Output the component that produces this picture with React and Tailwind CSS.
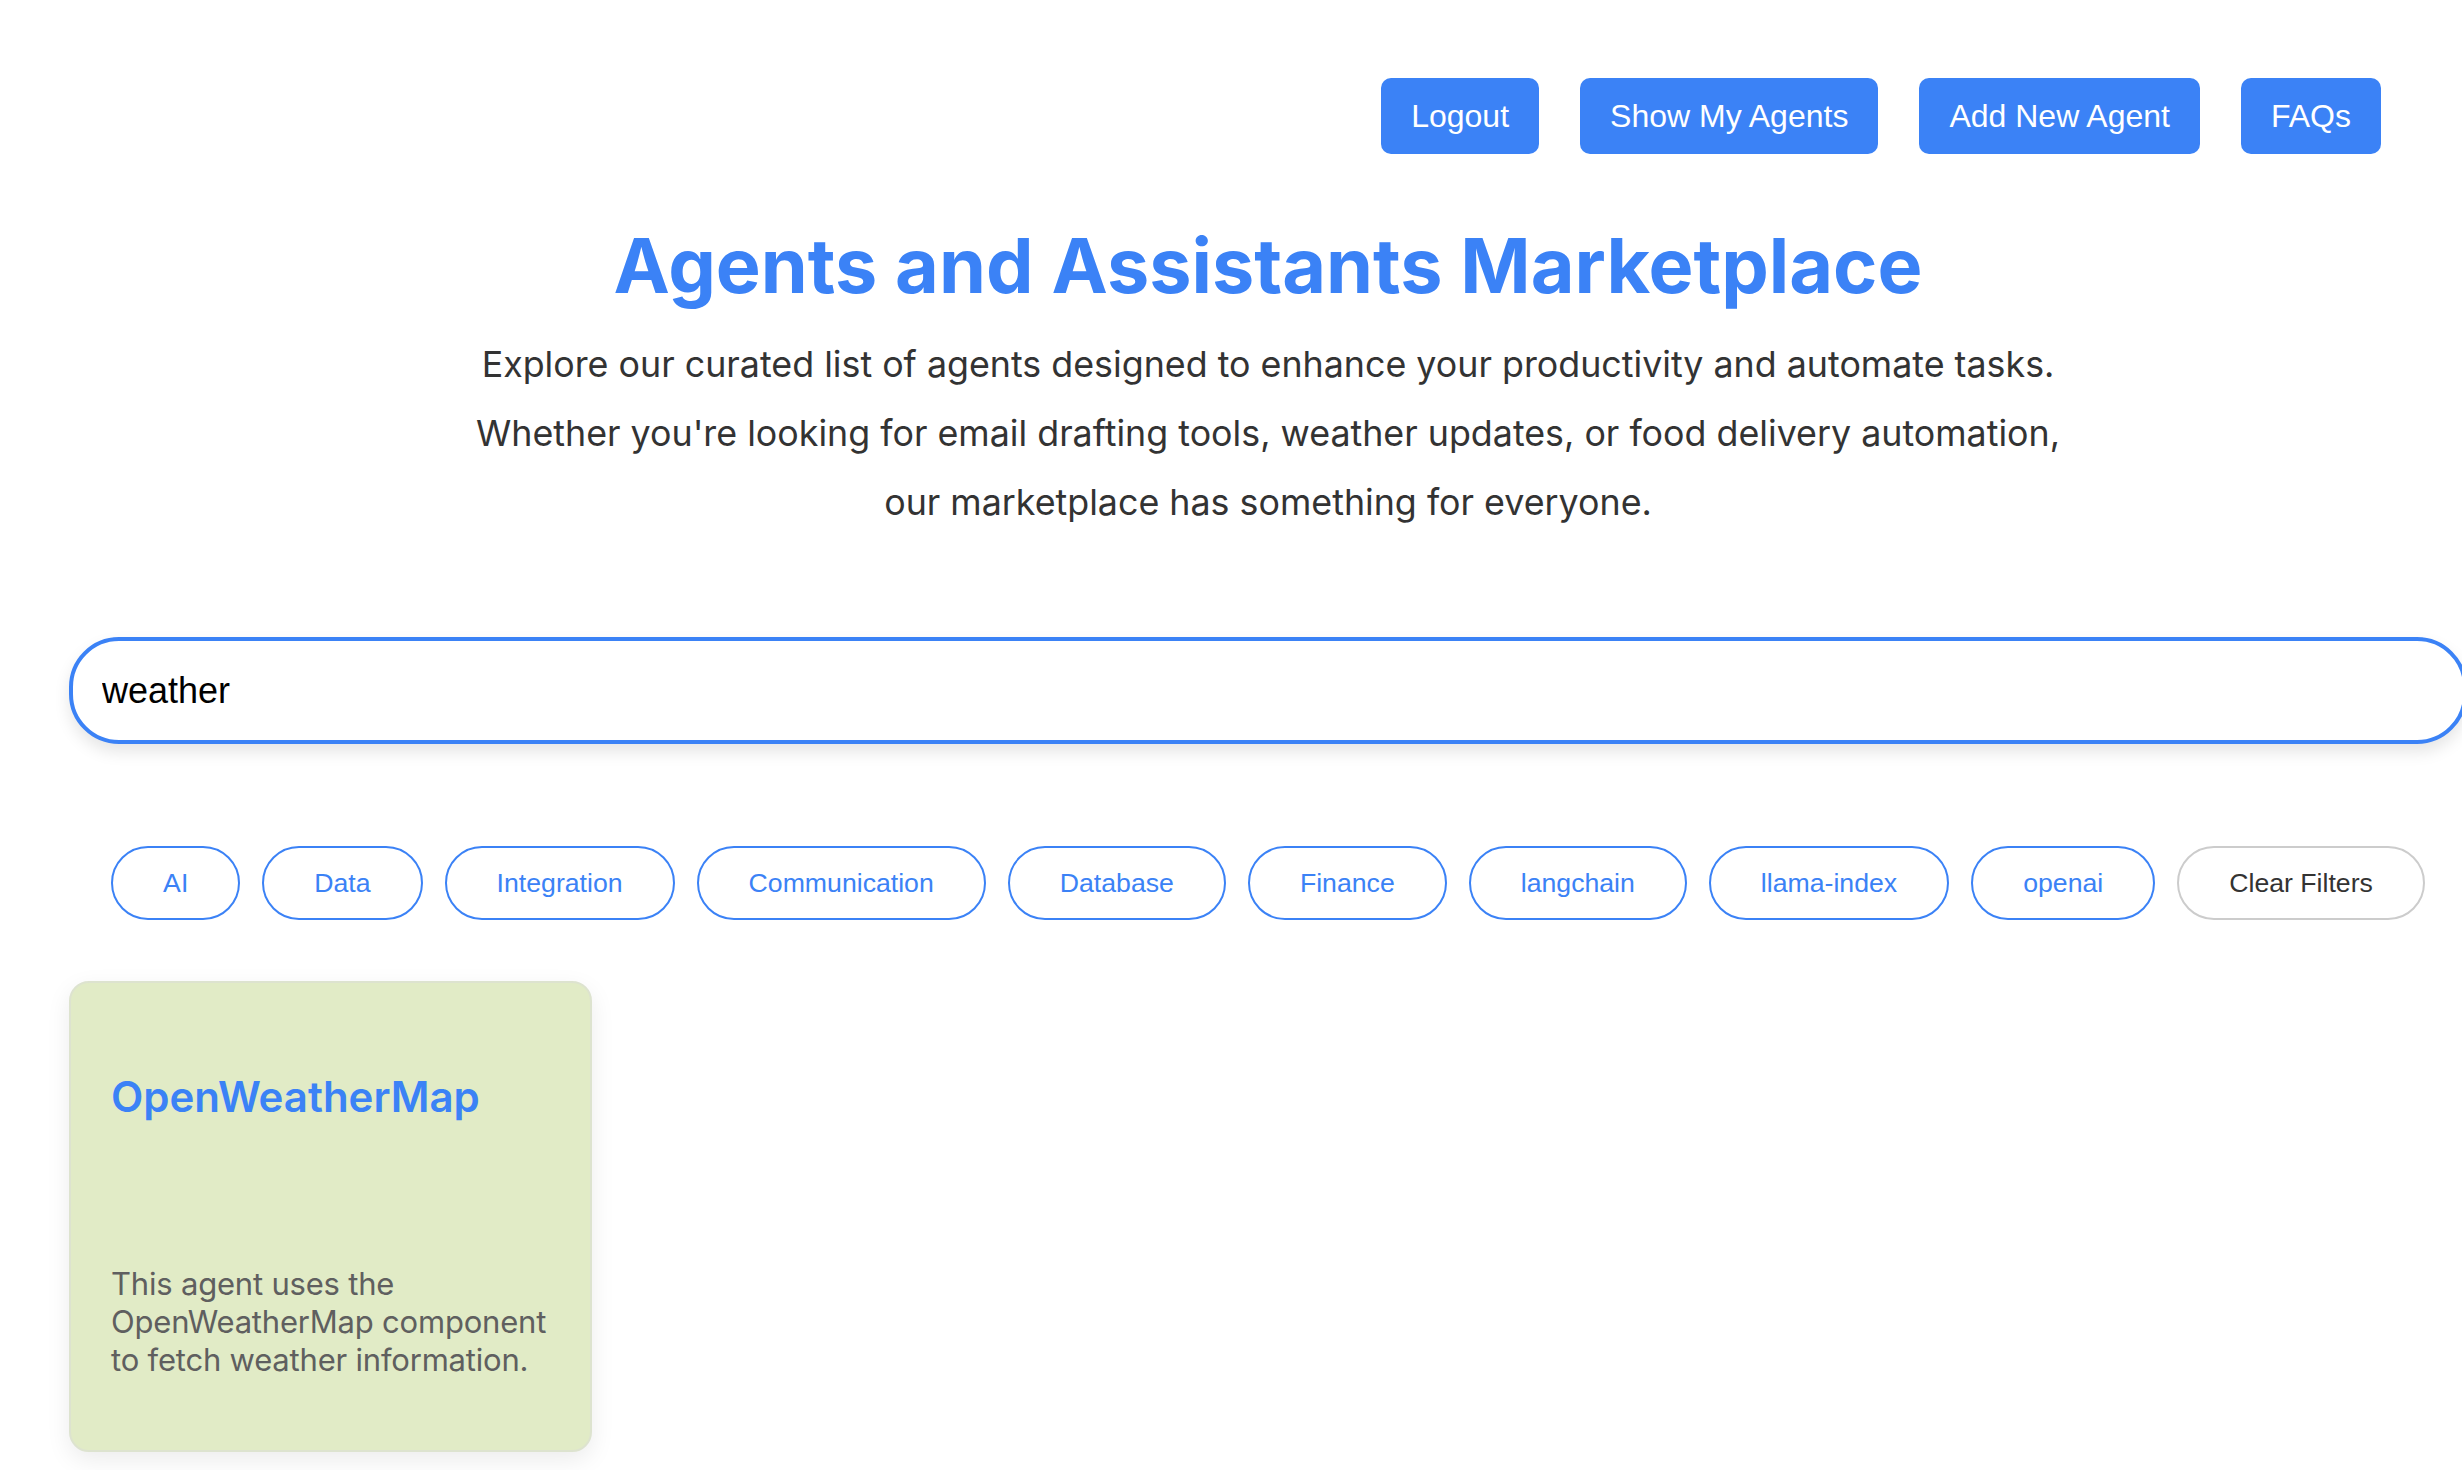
const tags = [
  "AI",
  "Data",
  "Integration",
  "Communication",
  "Database",
  "Finance",
  "langchain",
  "llama-index",
  "openai",
];

function NavButton({ children }) {
  return (
    <button
      type="button"
      className="h-[76px] rounded-[10px] bg-[#3b82f6] px-[30px] font-['Liberation_Sans',Arial,sans-serif] text-[32px] text-white"
    >
      {children}
    </button>
  );
}

function AgentCard({ name, lines }) {
  return (
    <div className="flex h-[471px] w-[523px] flex-col rounded-[20px] border-2 border-[#dde3cf] bg-[#e1ebc6] px-[40px] pt-[40px] pb-[40px] shadow-[0_8px_24px_rgba(0,0,0,0.08)]">
      <h3 className="mt-[48px] text-[42px] leading-[51px] font-semibold text-[#3b82f6]">
        {name}
      </h3>
      <p className="mt-auto mb-[31px] whitespace-nowrap text-[31px] leading-[38px] tracking-[-0.2px] text-[#5f5f5f]">
        {lines.map((l, i) => (
          <span key={i} className="block">
            {l}
          </span>
        ))}
      </p>
    </div>
  );
}

export default function App() {
  return (
    <div className="w-full overflow-hidden bg-white">
      <div className="w-[2536px] px-[69px] pb-[40px] font-['Inter',sans-serif]">
        <header className="flex justify-end gap-[41px] pt-[78px] pr-[86px]">
          <NavButton>Logout</NavButton>
          <NavButton>Show My Agents</NavButton>
          <NavButton>Add New Agent</NavButton>
          <NavButton>FAQs</NavButton>
        </header>

        <h1 className="mt-[65px] text-center text-[75.5px] leading-[93px] font-bold text-[#3b82f6]">
          Agents and Assistants Marketplace
        </h1>
        <p className="mt-[18px] text-center text-[35.8px] leading-[69px] text-[#333333]">
          Explore our curated list of agents designed to enhance your productivity and automate tasks.
          <br />
          Whether you're looking for email drafting tools, weather updates, or food delivery automation,
          <br />
          our marketplace has something for everyone.
        </p>

        <input
          type="text"
          defaultValue="weather"
          className="mt-[100px] block h-[107px] w-full rounded-[50px] border-4 border-[#3b82f6] bg-white pl-[29px] font-['Liberation_Sans',Arial,sans-serif] text-[36px] text-black shadow-[0_8px_16px_rgba(0,0,0,0.1)] outline-none"
        />

        <div className="mt-[102px] flex flex-wrap justify-center gap-[22px] font-['Liberation_Sans',Arial,sans-serif]">
          {tags.map((t) => (
            <button
              key={t}
              type="button"
              className="h-[74px] rounded-full border-2 border-[#3b82f6] bg-white px-[50px] text-[26.67px] text-[#3b82f6]"
            >
              {t}
            </button>
          ))}
          <button
            type="button"
            className="h-[74px] rounded-full border-2 border-[#cccccc] bg-white px-[50px] text-[26.67px] text-[#333333]"
          >
            Clear Filters
          </button>
        </div>

        <div className="mt-[61px] flex flex-wrap gap-[40px]">
          <AgentCard
            name="OpenWeatherMap"
            lines={[
              "This agent uses the",
              "OpenWeatherMap component",
              "to fetch weather information.",
            ]}
          />
        </div>
      </div>
    </div>
  );
}
